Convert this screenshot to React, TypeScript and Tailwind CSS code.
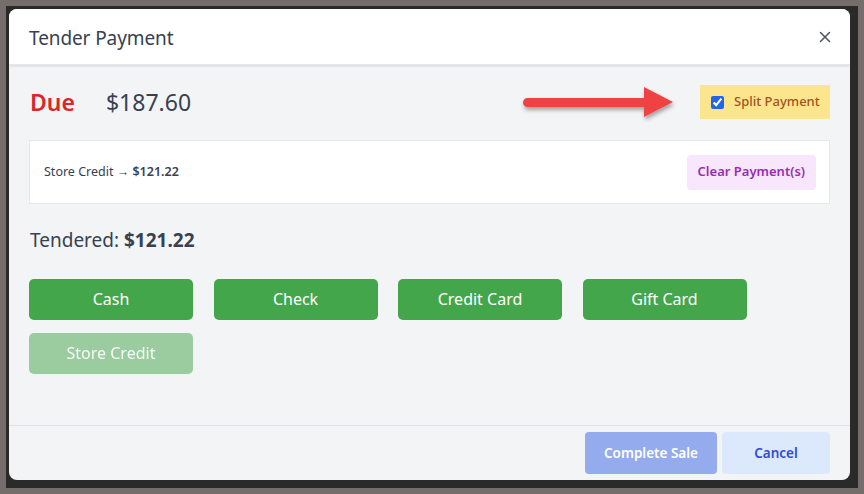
import { X } from "lucide-react";

const methods = ["Cash", "Check", "Credit Card", "Gift Card"];

const Arrow = () => (
  <svg className="absolute left-[503px] top-[67px]" width="176" height="50" viewBox="0 0 176 50">
    <defs>
      <filter id="sh" x="-10%" y="-30%" width="130%" height="180%">
        <feDropShadow dx="1" dy="3" stdDeviation="2" floodColor="#000" floodOpacity="0.35" />
      </filter>
    </defs>
    <g filter="url(#sh)">
      <path d="M15.5 22 H132 V11 L161 26 L132 41 V31 H15.5 a4.5 4.5 0 0 1 0 -9 Z" fill="#f04343" />
    </g>
  </svg>
);

export default function App() {
  return (
    <div
      className="w-[864px] h-[494px] bg-[#756c6c] p-[6px]"
      style={{ fontFamily: '"Noto Sans", "Open Sans", sans-serif' }}
    >
      <div className="h-full bg-[#2b2a2a] pl-[3px] pt-[3px] pr-[7px] pb-[7px]">
        <div className="relative w-[841px] h-[471px] rounded-[8px] bg-[#f3f4f6] flex flex-col overflow-hidden">
          {/* Header */}
          <div className="h-[56px] shrink-0 bg-white border-b border-[#e5e7eb] shadow-[0_1px_3px_rgba(0,0,0,0.12)] flex items-center justify-between pl-[20px] pr-[16px]">
            <h2 className="mt-[3px] text-[19px] text-[#374151] tracking-[-0.1px]">Tender Payment</h2>
            <X className="w-[18px] h-[18px] text-[#4b5563]" strokeWidth={2} />
          </div>

          {/* Body */}
          <div className="flex-1 px-[20px]">
            <div className="mt-[19px] h-[36px] flex items-center justify-between">
              <div className="flex items-center gap-[31px] pl-[1px]">
                <span className="text-[23px] font-semibold text-[#dc2626]">Due</span>
                <span className="text-[23px] text-[#374151]">$187.60</span>
              </div>
              <label className="h-[34px] w-[130px] bg-[#fbe58d] flex items-center gap-[10px] pl-[11px]">
                <input type="checkbox" defaultChecked className="w-[13px] h-[13px] accent-[#2563eb]" />
                <span className="text-[13px] font-medium text-[#a3531c]">Split Payment</span>
              </label>
            </div>

            <div className="mt-[20px] h-[64px] bg-white border border-[#e5e7eb] flex items-center justify-between pl-[14px] pr-[13px]">
              <span className="text-[12.5px] text-[#374151]">
                Store Credit → <span className="font-semibold">$121.22</span>
              </span>
              <button className="h-[35px] px-[11px] rounded-[4px] bg-[#f7e6fc] text-[13px] font-semibold text-[#9c2bb0]">
                Clear Payment(s)
              </button>
            </div>

            <div className="mt-[22px] text-[19px] text-[#374151] pl-[1px]">
              Tendered: <span className="font-bold">$121.22</span>
            </div>

            <div className="mt-[24px] grid grid-cols-[repeat(4,164px)] gap-x-[20.5px] gap-y-[13px]">
              {methods.map((m) => (
                <button key={m} className="h-[41px] rounded-[5px] bg-[#43a64b] text-white text-[16px]">
                  {m}
                </button>
              ))}
              <button disabled className="h-[41px] rounded-[5px] bg-[#43a64b] opacity-50 text-white text-[16px]">
                Store Credit
              </button>
            </div>
          </div>

          {/* Footer */}
          <div className="h-[55px] shrink-0 border-t border-[#e0e2e6] flex justify-end items-start gap-[5px] pt-[6px] pr-[20px]">
            <button className="h-[42px] w-[132px] rounded-[4px] bg-[#94abee] text-white text-[13.5px] font-semibold">
              Complete Sale
            </button>
            <button className="h-[42px] w-[108px] rounded-[4px] bg-[#dce8fc] text-[#2f4ed0] text-[13.5px] font-semibold">
              Cancel
            </button>
          </div>

          <Arrow />
        </div>
      </div>
    </div>
  );
}
